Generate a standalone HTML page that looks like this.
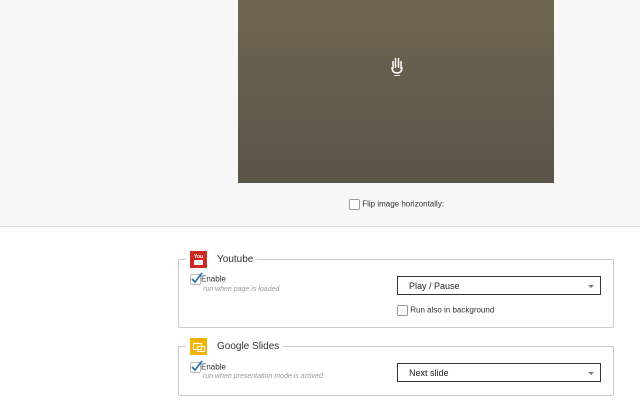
<!DOCTYPE html>
<html><head><style>
body{margin:0;width:640px;height:400px;overflow:hidden;background:#fff;font-family:"Liberation Sans",Arial,sans-serif;position:relative}
.top{position:absolute;left:0;top:0;width:640px;height:226px;background:#f7f7f7;border-bottom:1px solid #ddd}
.vid{position:absolute;left:238px;top:0;width:316px;height:183px;background:linear-gradient(180deg,#6e6550 0%,#645c4c 50%,#5b5448 100%)}
.flip{position:absolute;left:349px;top:199px;font-size:8px;color:#333}
.cb{display:inline-block;width:9px;height:9px;border:1px solid #999;border-radius:2px;background:#fff;vertical-align:middle}
.fs{position:absolute;left:178px;width:434px;border:1px solid #ccc;border-radius:2px}
.leg{position:absolute;background:#fff;padding:0 4px;font-size:10px;color:#333;display:flex;align-items:center;gap:10px}
.ic{width:17px;height:17px}
.sel{position:absolute;left:397px;width:204px;height:19px;border:1px solid #333;font-size:9px;color:#222;line-height:19px;box-sizing:border-box;padding-left:11px}
.sel:after{content:"";position:absolute;right:6px;top:8px;border:3px solid transparent;border-top:3px solid #777}
.en{position:absolute;left:190px;font-size:8px;color:#333}
.sub{position:absolute;left:203px;font-size:7px;color:#999;font-style:italic}
</style></head><body>
<div class="top"></div>
<div class="vid">
<svg style="position:absolute;left:152px;top:56px" width="14" height="22" viewBox="0 0 14 22"><path d="M3 13V5M5.5 12V2M8.5 12V2M11 13V5M2 11q0 6 5 6q5 0 5-6" stroke="#fff" stroke-width="1.5" fill="none"/><rect x="4" y="19" width="6" height="1" fill="#ddd"/></svg>
</div>
<div class="flip"><span class="cb"></span> Flip image horizontally:</div>

<div class="fs" style="top:259px;height:67px"></div>
<div class="leg" style="left:186px;top:251px"><div class="ic" style="background:#cc2a1e;position:relative"><div style="position:absolute;left:4px;top:9px;width:9px;height:5px;background:#fff;border-radius:1px"></div><div style="position:absolute;left:4px;top:3px;font-size:5px;color:#fff;font-weight:bold">You</div></div><span>Youtube</span></div>
<div class="en" style="top:274px"><span class="cb" style="border-color:#bbb"></span>Enable</div>
<svg style="position:absolute;left:191px;top:272px" width="12" height="12"><path d="M1 7l3 3 7-9" stroke="#1a6fb5" stroke-width="1.6" fill="none"/></svg>
<div class="sub" style="top:286px">run when page is loaded</div>
<div class="sel" style="top:276px">Play / Pause</div>
<div style="position:absolute;left:397px;top:305px;font-size:8px;color:#333"><span class="cb"></span> Run also in background</div>

<div class="fs" style="top:346px;height:48px"></div>
<div class="leg" style="left:186px;top:338px"><div class="ic" style="background:#f4b400;position:relative"><div style="position:absolute;left:3px;top:5px;width:7px;height:5px;border:1px solid #fff"></div><div style="position:absolute;left:7px;top:8px;width:6px;height:4px;border:1px solid #fff"></div></div><span>Google Slides</span></div>
<div class="en" style="top:362px"><span class="cb" style="border-color:#bbb"></span>Enable</div>
<svg style="position:absolute;left:191px;top:360px" width="12" height="12"><path d="M1 7l3 3 7-9" stroke="#1a6fb5" stroke-width="1.6" fill="none"/></svg>
<div class="sub" style="top:373px">run when presentation mode is actived</div>
<div class="sel" style="top:363px">Next slide</div>
</body></html>
